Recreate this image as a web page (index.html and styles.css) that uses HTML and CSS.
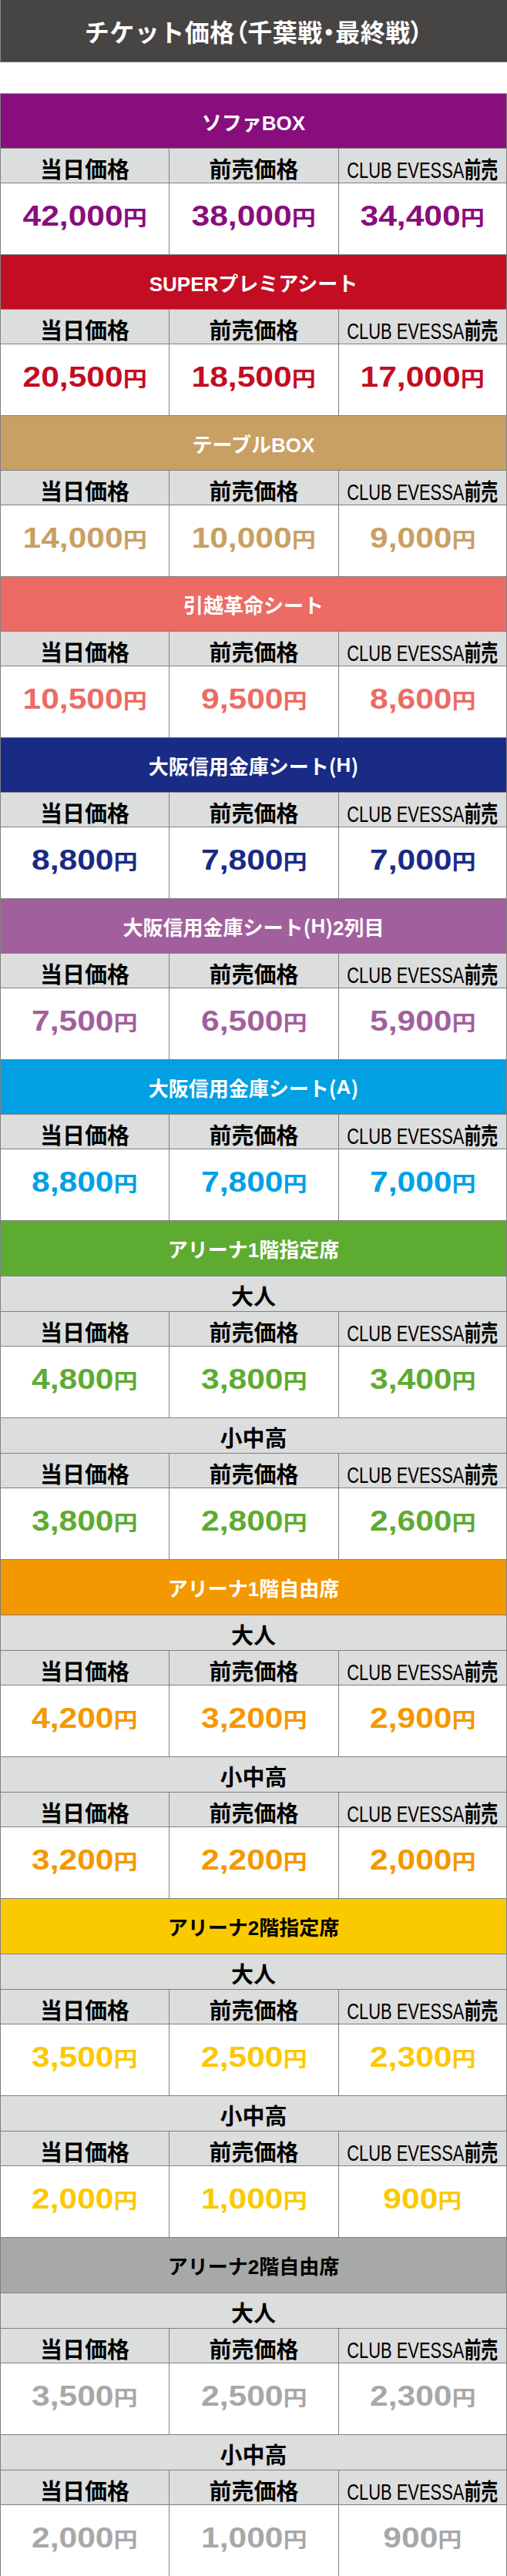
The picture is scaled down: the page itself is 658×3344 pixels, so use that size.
FILE: index.html
```html
<!DOCTYPE html>
<html lang="ja">
<head>
<meta charset="utf-8">
<title>チケット価格（千葉戦・最終戦）</title>
<link rel="stylesheet" href="styles.css">
</head>
<body>
<div class="page">
  <h1 class="title">チケット価格<span class="prop">（</span>千葉戦<span class="prop">・</span>最終戦<span class="prop">）</span></h1>
  <div class="table">

    <section class="sec c-purple">
      <div class="sec-head">ソファBOX</div>
      <div class="row labels"><div class="cell">当日価格</div><div class="cell">前売価格</div><div class="cell"><span class="club">CLUB EVESSA<b>前売</b></span></div></div>
      <div class="row prices"><div class="cell"><span class="p">42,000<span class="yen">円</span></span></div><div class="cell"><span class="p">38,000<span class="yen">円</span></span></div><div class="cell"><span class="p">34,400<span class="yen">円</span></span></div></div>
    </section>

    <section class="sec c-red">
      <div class="sec-head">SUPERプレミアシート</div>
      <div class="row labels"><div class="cell">当日価格</div><div class="cell">前売価格</div><div class="cell"><span class="club">CLUB EVESSA<b>前売</b></span></div></div>
      <div class="row prices"><div class="cell"><span class="p">20,500<span class="yen">円</span></span></div><div class="cell"><span class="p">18,500<span class="yen">円</span></span></div><div class="cell"><span class="p">17,000<span class="yen">円</span></span></div></div>
    </section>

    <section class="sec c-tan">
      <div class="sec-head">テーブルBOX</div>
      <div class="row labels"><div class="cell">当日価格</div><div class="cell">前売価格</div><div class="cell"><span class="club">CLUB EVESSA<b>前売</b></span></div></div>
      <div class="row prices"><div class="cell"><span class="p">14,000<span class="yen">円</span></span></div><div class="cell"><span class="p">10,000<span class="yen">円</span></span></div><div class="cell"><span class="p">9,000<span class="yen">円</span></span></div></div>
    </section>

    <section class="sec c-salmon">
      <div class="sec-head">引越革命シート</div>
      <div class="row labels"><div class="cell">当日価格</div><div class="cell">前売価格</div><div class="cell"><span class="club">CLUB EVESSA<b>前売</b></span></div></div>
      <div class="row prices"><div class="cell"><span class="p">10,500<span class="yen">円</span></span></div><div class="cell"><span class="p">9,500<span class="yen">円</span></span></div><div class="cell"><span class="p">8,600<span class="yen">円</span></span></div></div>
    </section>

    <section class="sec c-navy">
      <div class="sec-head">大阪信用金庫シート<span class="paren">(</span>H<span class="paren">)</span></div>
      <div class="row labels"><div class="cell">当日価格</div><div class="cell">前売価格</div><div class="cell"><span class="club">CLUB EVESSA<b>前売</b></span></div></div>
      <div class="row prices"><div class="cell"><span class="p">8,800<span class="yen">円</span></span></div><div class="cell"><span class="p">7,800<span class="yen">円</span></span></div><div class="cell"><span class="p">7,000<span class="yen">円</span></span></div></div>
    </section>

    <section class="sec c-mauve">
      <div class="sec-head">大阪信用金庫シート<span class="paren">(</span>H<span class="paren">)</span>2列目</div>
      <div class="row labels"><div class="cell">当日価格</div><div class="cell">前売価格</div><div class="cell"><span class="club">CLUB EVESSA<b>前売</b></span></div></div>
      <div class="row prices"><div class="cell"><span class="p">7,500<span class="yen">円</span></span></div><div class="cell"><span class="p">6,500<span class="yen">円</span></span></div><div class="cell"><span class="p">5,900<span class="yen">円</span></span></div></div>
    </section>

    <section class="sec c-cyan">
      <div class="sec-head">大阪信用金庫シート<span class="paren">(</span>A<span class="paren">)</span></div>
      <div class="row labels"><div class="cell">当日価格</div><div class="cell">前売価格</div><div class="cell"><span class="club">CLUB EVESSA<b>前売</b></span></div></div>
      <div class="row prices"><div class="cell"><span class="p">8,800<span class="yen">円</span></span></div><div class="cell"><span class="p">7,800<span class="yen">円</span></span></div><div class="cell"><span class="p">7,000<span class="yen">円</span></span></div></div>
    </section>

    <section class="sec big c-green">
      <div class="sec-head">アリーナ1階指定席</div>
      <div class="group">大人</div>
      <div class="row labels"><div class="cell">当日価格</div><div class="cell">前売価格</div><div class="cell"><span class="club">CLUB EVESSA<b>前売</b></span></div></div>
      <div class="row prices"><div class="cell"><span class="p">4,800<span class="yen">円</span></span></div><div class="cell"><span class="p">3,800<span class="yen">円</span></span></div><div class="cell"><span class="p">3,400<span class="yen">円</span></span></div></div>
      <div class="group">小中高</div>
      <div class="row labels"><div class="cell">当日価格</div><div class="cell">前売価格</div><div class="cell"><span class="club">CLUB EVESSA<b>前売</b></span></div></div>
      <div class="row prices"><div class="cell"><span class="p">3,800<span class="yen">円</span></span></div><div class="cell"><span class="p">2,800<span class="yen">円</span></span></div><div class="cell"><span class="p">2,600<span class="yen">円</span></span></div></div>
    </section>

    <section class="sec big c-orange">
      <div class="sec-head">アリーナ1階自由席</div>
      <div class="group">大人</div>
      <div class="row labels"><div class="cell">当日価格</div><div class="cell">前売価格</div><div class="cell"><span class="club">CLUB EVESSA<b>前売</b></span></div></div>
      <div class="row prices"><div class="cell"><span class="p">4,200<span class="yen">円</span></span></div><div class="cell"><span class="p">3,200<span class="yen">円</span></span></div><div class="cell"><span class="p">2,900<span class="yen">円</span></span></div></div>
      <div class="group">小中高</div>
      <div class="row labels"><div class="cell">当日価格</div><div class="cell">前売価格</div><div class="cell"><span class="club">CLUB EVESSA<b>前売</b></span></div></div>
      <div class="row prices"><div class="cell"><span class="p">3,200<span class="yen">円</span></span></div><div class="cell"><span class="p">2,200<span class="yen">円</span></span></div><div class="cell"><span class="p">2,000<span class="yen">円</span></span></div></div>
    </section>

    <section class="sec big c-yellow">
      <div class="sec-head">アリーナ2階指定席</div>
      <div class="group">大人</div>
      <div class="row labels"><div class="cell">当日価格</div><div class="cell">前売価格</div><div class="cell"><span class="club">CLUB EVESSA<b>前売</b></span></div></div>
      <div class="row prices"><div class="cell"><span class="p">3,500<span class="yen">円</span></span></div><div class="cell"><span class="p">2,500<span class="yen">円</span></span></div><div class="cell"><span class="p">2,300<span class="yen">円</span></span></div></div>
      <div class="group">小中高</div>
      <div class="row labels"><div class="cell">当日価格</div><div class="cell">前売価格</div><div class="cell"><span class="club">CLUB EVESSA<b>前売</b></span></div></div>
      <div class="row prices"><div class="cell"><span class="p">2,000<span class="yen">円</span></span></div><div class="cell"><span class="p">1,000<span class="yen">円</span></span></div><div class="cell"><span class="p">900<span class="yen">円</span></span></div></div>
    </section>

    <section class="sec big c-grey">
      <div class="sec-head">アリーナ2階自由席</div>
      <div class="group">大人</div>
      <div class="row labels"><div class="cell">当日価格</div><div class="cell">前売価格</div><div class="cell"><span class="club">CLUB EVESSA<b>前売</b></span></div></div>
      <div class="row prices"><div class="cell"><span class="p">3,500<span class="yen">円</span></span></div><div class="cell"><span class="p">2,500<span class="yen">円</span></span></div><div class="cell"><span class="p">2,300<span class="yen">円</span></span></div></div>
      <div class="group">小中高</div>
      <div class="row labels"><div class="cell">当日価格</div><div class="cell">前売価格</div><div class="cell"><span class="club">CLUB EVESSA<b>前売</b></span></div></div>
      <div class="row prices"><div class="cell"><span class="p">2,000<span class="yen">円</span></span></div><div class="cell"><span class="p">1,000<span class="yen">円</span></span></div><div class="cell"><span class="p">900<span class="yen">円</span></span></div></div>
    </section>

  </div>
</div>
</body>
</html>
```
FILE: styles.css
```css
* { box-sizing: border-box; }
html, body { margin: 0; padding: 0; background: #fff; }
body {
  font-family: "Liberation Sans", "Noto Sans CJK JP", sans-serif;
  color: #000;
}
.page { width: 658px; }

.title {
  margin: 0;
  height: 81px;
  background: #474444;
  border-left: 1px solid #8a8a8a;
  border-bottom: 1px solid #8a8a8a;
  color: #fff;
  font-family: "Noto Sans CJK JP", sans-serif;
  font-size: 32px;
  letter-spacing: 0.5px;
  font-weight: 700;
  display: flex;
  align-items: center;
  justify-content: center;
  padding-bottom: 1px;
}
.title .prop { font-feature-settings: "palt"; }
.sec-head .paren { font-family: "Noto Sans CJK JP", sans-serif; }

.table {
  margin-top: 40px;
  border-left: 1px solid #808080;
  border-right: 1px solid #808080;
  border-bottom: 1px solid #808080;
}

.sec { --c: #888; }
.sec-head {
  height: 71px;
  border-top: 1px solid #808080;
  background: var(--c);
  color: #fff;
  font-size: 26px;
  font-weight: 700;
  display: flex;
  align-items: center;
  justify-content: center;
}
.sec.big .sec-head { height: 72px; }

.group {
  height: 46px;
  border-top: 1px solid #808080;
  background: #dcdddd;
  font-family: "Noto Sans CJK JP", sans-serif;
  font-size: 29px;
  font-weight: 700;
  display: flex;
  align-items: center;
  justify-content: center;
  padding-top: 2px;
}

.row {
  display: grid;
  grid-template-columns: 218px 220px 218px;
  border-top: 1px solid #808080;
}
.row .cell {
  display: flex;
  align-items: center;
  justify-content: center;
  white-space: nowrap;
}
.row .cell + .cell { border-left: 1px solid #808080; }

.labels { height: 45px; background: #dcdddd; }
.labels .cell {
  font-family: "Noto Sans CJK JP", sans-serif;
  font-size: 29px;
  font-weight: 700;
  padding-top: 3px;
}
.club {
  display: inline-block;
  font-family: "Liberation Sans", "Noto Sans CJK JP", sans-serif;
  font-size: 30px;
  font-weight: 400;
  transform: scaleX(0.73);
}
.club b {
  font-family: "Noto Sans CJK JP", sans-serif;
  font-weight: 700;
}

.prices { height: 93px; background: #fff; }
.prices .cell { padding-bottom: 6px; }
.p {
  display: inline-block;
  color: var(--c);
  font-family: "Liberation Sans", sans-serif;
  font-size: 37px;
  font-weight: 700;
  transform: scaleX(1.15);
}
.yen {
  font-family: "Noto Sans CJK JP", sans-serif;
  font-size: 27px;
  font-weight: 700;
}

.c-purple { --c: #880e7d; }
.c-red { --c: #c30d23; }
.c-tan { --c: #c8a063; }
.c-salmon { --c: #ec6b64; }
.c-navy { --c: #192b84; }
.c-mauve { --c: #a25f9d; }
.c-cyan { --c: #00a0e3; }
.c-green { --c: #5eab32; }
.c-orange { --c: #f39800; }
.c-yellow { --c: #fbc900; }
.c-grey { --c: #a7a8a8; }
.c-yellow .sec-head, .c-grey .sec-head { color: #000; }
```
